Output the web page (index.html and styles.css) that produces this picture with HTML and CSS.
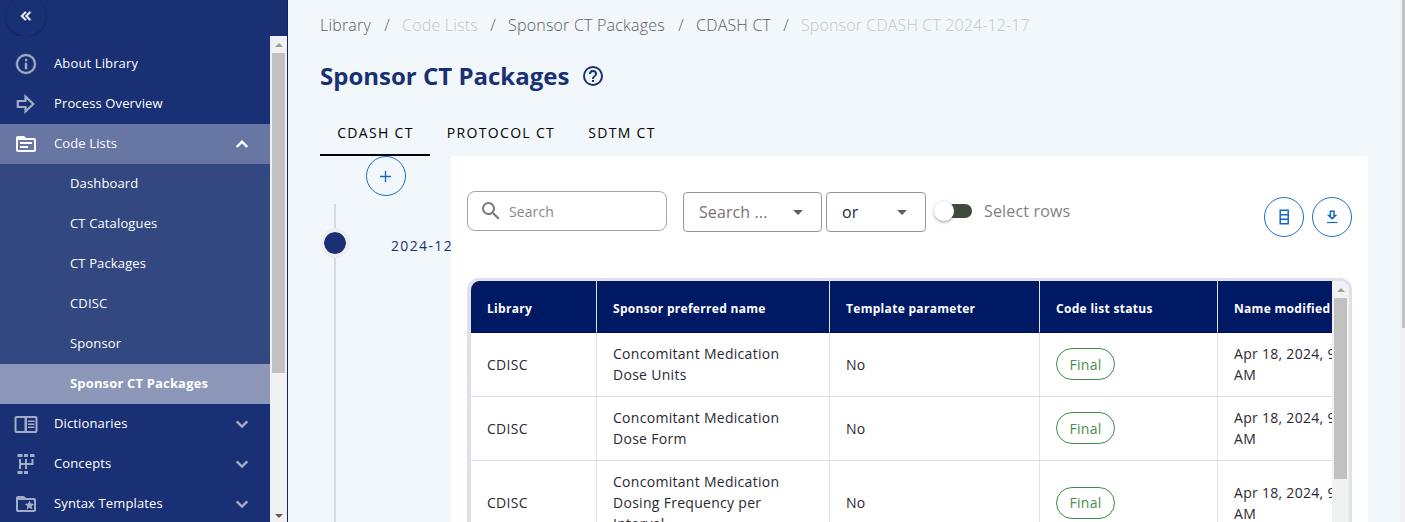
FILE: index.html
```html
<!DOCTYPE html>
<html lang="en">
<head>
<meta charset="utf-8">
<title>Sponsor CT Packages</title>
<link rel="stylesheet" href="styles.css">
</head>
<body>
<div class="app">
  <nav class="sidebar">
    <div class="sidebar-top">
      <button class="collapse"><svg class="i18" viewBox="0 0 24 24"><path d="M18.41,7.41L17,6L11,12L17,18L18.41,16.59L13.83,12L18.41,7.41M12.41,7.41L11,6L5,12L11,18L12.41,16.59L7.83,12L12.41,7.41Z" stroke="currentColor" stroke-width=".8"/></svg></button>
    </div>
    <div class="sidebar-body">
      <div class="menu">
        <a class="item"><svg class="i24" viewBox="0 0 24 24"><path d="M11,9H13V7H11M12,20C7.59,20 4,16.41 4,12C4,7.59 7.59,4 12,4C16.41,4 20,7.59 20,12C20,16.41 16.41,20 12,20M12,2A10,10 0 0,0 2,12A10,10 0 0,0 12,22A10,10 0 0,0 22,12A10,10 0 0,0 12,2M11,17H13V11H11V17Z" stroke="currentColor" stroke-width=".4"/></svg><span>About Library</span></a>
        <a class="item"><svg class="i24" viewBox="0 0 24 24"><path d="M3.8 9H11.5V4.5L19.3 12L11.5 19.5V15H3.8Z" fill="none" stroke="currentColor" stroke-width="2.2"/></svg><span>Process Overview</span></a>
        <a class="item open"><svg class="i24" viewBox="0 0 24 24"><path d="M20,6H12L10,4H4A2,2 0 0,0 2,6V18A2,2 0 0,0 4,20H20A2,2 0 0,0 22,18V8A2,2 0 0,0 20,6M20,18H4V8H20V18M18,12H6V10H18V12M14,16H6V14H14V16Z"/></svg><span>Code Lists</span><svg class="i24 chev" viewBox="0 0 24 24"><path d="M6.7 15L12 9.7L17.3 15"/></svg></a>
        <div class="submenu">
          <a class="sub">Dashboard</a>
          <a class="sub">CT Catalogues</a>
          <a class="sub">CT Packages</a>
          <a class="sub">CDISC</a>
          <a class="sub">Sponsor</a>
          <a class="sub selected">Sponsor CT Packages</a>
        </div>
        <a class="item"><svg class="i24" viewBox="0 0 24 24"><path fill-rule="evenodd" d="M2.5 4H21.5A2 2 0 0 1 23.5 6V19A2 2 0 0 1 21.5 21H2.5A2 2 0 0 1 .5 19V6A2 2 0 0 1 2.5 4ZM2.5 6V19H10.5V6ZM13 6V19H21.5V6ZM14 8.5H20.5V10H14ZM14 11.5H20.5V13H14ZM14 14.5H20.5V16H14Z"/></svg><span>Dictionaries</span><svg class="i24 chev" viewBox="0 0 24 24"><path d="M6.7 9.3L12 14.5L17.3 9.3"/></svg></a>
        <a class="item"><svg class="i24" viewBox="0 0 24 24"><path d="M3.5 2H8.5V5H3.5ZM10 2H14V5H10ZM16 2H20.5V5H16ZM3.5 19H8.5V22H3.5ZM10 19H14V22H10Z"/><path d="M6 7V17M12 7V17M18.5 7V12H6" fill="none" stroke="currentColor" stroke-width="2"/></svg><span>Concepts</span><svg class="i24 chev" viewBox="0 0 24 24"><path d="M6.7 9.3L12 14.5L17.3 9.3"/></svg></a>
        <a class="item"><svg class="i24" viewBox="0 0 24 24"><path fill-rule="evenodd" d="M20,6H12L10,4H4A2,2 0 0,0 2,6V18A2,2 0 0,0 4,20H20A2,2 0 0,0 22,18V8A2,2 0 0,0 20,6M4 8H20V18H4Z"/><path d="M15.5 8.5L16.9 11.6L20.2 12L17.7 14.2L18.4 17.5L15.5 15.8L12.6 17.5L13.3 14.2L10.8 12L14.1 11.6Z"/></svg><span>Syntax Templates</span><svg class="i24 chev" viewBox="0 0 24 24"><path d="M6.7 9.3L12 14.5L17.3 9.3"/></svg></a>
      </div>
      <div class="scrollbar"><i class="arrow up"></i><i class="thumb side-thumb"></i><i class="arrow down"></i></div>
    </div>
  </nav>

  <main class="main">
    <div class="breadcrumbs">
      <span class="b1">Library</span><span class="sep">/</span><span class="b2 off">Code Lists</span><span class="sep">/</span><span class="b3">Sponsor CT Packages</span><span class="sep">/</span><span class="b4">CDASH CT</span><span class="sep">/</span><span class="b5 off">Sponsor CDASH CT 2024-12-17</span>
    </div>
    <h1 class="title"><span>Sponsor CT Packages</span><svg class="i24" viewBox="0 0 24 24"><path d="M11,18H13V16H11V18M12,2A10,10 0 0,0 2,12A10,10 0 0,0 12,22A10,10 0 0,0 22,12A10,10 0 0,0 12,2M12,20C7.59,20 4,16.41 4,12C4,7.59 7.59,4 12,4C16.41,4 20,7.59 20,12C20,16.41 16.41,20 12,20M12,6A4,4 0 0,0 8,10H10A2,2 0 0,1 12,8A2,2 0 0,1 14,10C14,12 11,11.75 11,15H13C13,12.75 16,12.5 16,10A4,4 0 0,0 12,6Z"/></svg></h1>
    <div class="tabs"><a class="tab active">CDASH CT</a><a class="tab wide">PROTOCOL CT</a><a class="tab">SDTM CT</a></div>

    <div class="content">
      <aside class="timeline">
        <button class="round add"><svg class="i16" viewBox="0 0 16 16"><path d="M2 8.5H13M7.5 3V14" fill="none" stroke="currentColor" stroke-width="1.3"/></svg></button>
        <div class="track">
          <div class="rail"><i class="line first"></i><i class="dot"></i><i class="line"></i></div>
          <span class="date">2024-12-17</span>
        </div>
      </aside>

      <section class="panel">
        <div class="toolbar">
          <div class="search"><svg class="i24" viewBox="0 0 24 24"><path d="M9.5,3A6.5,6.5 0 0,1 16,9.5C16,11.11 15.41,12.59 14.44,13.73L14.71,14H15.5L20.5,19L19,20.5L14,15.5V14.71L13.73,14.44C12.59,15.41 11.11,16 9.5,16A6.5,6.5 0 0,1 3,9.5A6.5,6.5 0 0,1 9.5,3M9.5,5C7,5 5,7 5,9.5C5,12 7,14 9.5,14C12,14 14,12 14,9.5C14,7 12,5 9.5,5Z"/></svg><span>Search</span></div>
          <div class="select columns"><span>Search ...</span><i class="caret"></i></div>
          <div class="select logic"><span>or</span><i class="caret"></i></div>
          <div class="switch"><i class="knob"></i></div>
          <span class="switch-label">Select rows</span>
          <div class="actions">
            <button class="round"><svg class="i16" viewBox="0 0 16 16"><path d="M4.2 1.2H12.2V14.8H4.2ZM4.2 5.7H12.2M4.2 10.2H12.2" fill="none" stroke="currentColor" stroke-width="1.5"/></svg></button>
            <button class="round"><svg class="i16" viewBox="0 0 16 16"><path d="M6.4 2.2H10V6.4H11.6L8.2 9.6L4.8 6.4H6.4Z" fill="none" stroke="currentColor" stroke-width="1.5"/><path d="M3 13.5H13.5" fill="none" stroke="currentColor" stroke-width="1.2"/></svg></button>
          </div>
        </div>

        <div class="table-frame">
          <div class="table">
            <div class="row head"><div>Library</div><div>Sponsor preferred name</div><div>Template parameter</div><div>Code list status</div><div>Name modified</div></div>
            <div class="row"><div>CDISC</div><div>Concomitant Medication<br>Dose Units</div><div>No</div><div><span class="chip">Final</span></div><div>Apr 18, 2024, 9:24<br>AM</div></div>
            <div class="row"><div>CDISC</div><div>Concomitant Medication<br>Dose Form</div><div>No</div><div><span class="chip">Final</span></div><div>Apr 18, 2024, 9:24<br>AM</div></div>
            <div class="row tall"><div>CDISC</div><div>Concomitant Medication<br>Dosing Frequency per<br>Interval</div><div>No</div><div><span class="chip">Final</span></div><div>Apr 18, 2024, 9:24<br>AM</div></div>
          </div>
          <div class="scrollbar"><i class="arrow up"></i><i class="thumb table-thumb"></i></div>
        </div>
      </section>
    </div>
  </main>
  <div class="page-scroll"><i></i></div>
</div>
</body>
</html>
```
FILE: styles.css
```css
* { box-sizing: border-box; }
body { margin: 0; font-family: "Open Sans", "Noto Sans", sans-serif; color: #2b2833; }
button { padding: 0; font: inherit; }
svg { display: block; flex: none; fill: currentColor; }
i { display: block; flex: none; }
.i24 { width: 24px; height: 24px; }
.i18 { width: 18px; height: 18px; }
.i16 { width: 16px; height: 16px; }

.app { display: flex; width: 1405px; height: 522px; overflow: hidden; background: #f2f7fb; }

/* Sidebar */
.sidebar { flex: none; width: 288px; height: 522px; background: #193074; border-right: 1px solid #11265f; color: #fff; }
.sidebar-top { height: 36px; padding-left: 6px; overflow: hidden; }
.collapse { display: flex; align-items: center; justify-content: center; width: 40px; height: 40px; margin-top: -4px; border: 0; border-radius: 50%; background: #193074; color: #fff; box-shadow: 0 1px 2px rgba(0, 0, 0, .32); }
.sidebar-body { display: flex; height: 486px; }
.menu { width: 270px; padding-top: 8px; overflow: hidden; }
.item { display: flex; align-items: center; height: 40px; padding: 0 16px 0 14px; font-size: 13px; letter-spacing: .13px; }
.item > span { flex: 1; margin-left: 16px; line-height: 18px; padding-bottom: 2px; }
.item svg { color: #a3acc7; }
.item.open { background: #6876a3; }
.item.open svg { color: #fff; }
.chev path { fill: none; stroke: currentColor; stroke-width: 2.4; }
.submenu { background: #334881; }
.sub { display: flex; align-items: center; height: 40px; padding: 0 0 2px 70px; font-size: 13px; letter-spacing: .14px; }
.sub.selected { background: #8c97b9; font-weight: 700; letter-spacing: .16px; }

/* Scrollbars */
.scrollbar { display: flex; flex-direction: column; flex: none; width: 17px; background: #f0f1f1; }
.arrow { width: 0; height: 0; margin: 7px auto 6px; border: 4px solid transparent; }
.arrow.up { border-top: 0; border-bottom-color: #a0a0a0; }
.arrow.down { margin: auto auto 4px; border-bottom: 0; border-top-color: #665c58; }
.thumb { width: 13px; margin: 0 2px; background: #c1c1c1; }
.side-thumb { height: 320px; }
.table-thumb { height: 181px; }
.page-scroll { flex: none; width: 5px; background: #f0f1f1; padding-left: 2px; }
.page-scroll i { height: 328px; background: #c1c1c1; }

/* Header area */
.main { width: 1112px; padding-left: 32px; }
.breadcrumbs { display: flex; align-items: center; height: 26px; margin-top: 12px; font-size: 16px; font-weight: 300; letter-spacing: .2px; color: #5c6065; white-space: nowrap; }
.breadcrumbs .off { color: #c3c6cd; }
.sep { width: 30px; text-align: center; }
.b1 { width: 52px; }
.b2 { width: 76px; }
.b3 { width: 158px; }
.b4 { width: 75px; }
.b5 { letter-spacing: .13px; }
.title { display: flex; align-items: center; height: 36px; margin: 20px 0 0; font-size: 24px; font-weight: 700; color: #193074; }
.title span { width: 249px; margin-right: 12px; padding-bottom: 2px; white-space: nowrap; }
.tabs { display: flex; height: 48px; margin-top: 14px; }
.tab { display: flex; align-items: center; justify-content: center; height: 48px; width: 100px; font-size: 14px; letter-spacing: 1.32px; color: #000; white-space: nowrap; }
.tab.active { width: 110px; border-bottom: 2px solid #00000f; padding: 2px 0 0 1px; }
.tab.wide { width: 142px; }

/* Timeline */
.content { display: flex; height: 366px; }
.timeline { flex: none; width: 131px; overflow: hidden; }
.round { display: flex; align-items: center; justify-content: center; width: 40px; height: 40px; border: 1px solid #1a70cd; border-radius: 50%; background: transparent; color: #1467c2; }
.add { margin-left: 46px; }
.track { display: flex; height: 318px; margin-top: 8px; }
.rail { display: flex; flex-direction: column; align-items: center; width: 30px; }
.line { flex: 1; width: 2px; background: #d7dbdf; }
.line.first { flex: none; height: 24px; }
.dot { width: 30px; height: 30px; border: 4px solid #edeef0; border-radius: 50%; background: #193074; background-clip: padding-box; }
.date { margin: 32px 0 0 41px; font-size: 14px; line-height: 20px; letter-spacing: 1.35px; color: #193074; white-space: nowrap; }

/* Panel */
.panel { width: 917px; padding: 35px 16px 0; background: #fff; overflow: hidden; }
.toolbar { display: flex; height: 87px; align-items: flex-start; }
.search { display: flex; align-items: center; width: 200px; height: 40px; padding-left: 11px; border: 1px solid #a3a3a3; border-radius: 8px; color: #777; font-size: 14px; }
.search svg { margin-top: -1px; }
.search span { margin-left: 6px; color: #878787; letter-spacing: .1px; }
.select { display: flex; align-items: center; justify-content: space-between; height: 40px; margin-top: 1px; padding: 0 18px 0 15px; border: 1px solid #969696; border-radius: 4px; font-size: 16px; }
.columns { width: 139px; margin-left: 16px; color: #79706f; letter-spacing: .1px; }
.logic { width: 100px; margin-left: 4px; }
.caret { border: 5px solid transparent; border-top-color: #655e5d; border-bottom: 0; }
.switch { width: 26px; height: 14px; margin: 13px 0 0 20px; border-radius: 7px; background: #3f4b3d; }
.knob { width: 20px; height: 20px; margin: -3px 0 0 -12px; border-radius: 50%; background: #fff; box-shadow: 0 2px 3px rgba(60, 70, 90, .3), 0 0 2px 1px rgba(100, 140, 170, .14); }
.switch-label { margin: 9px 0 0 12px; font-size: 16px; line-height: 22px; letter-spacing: .17px; color: #828282; }
.actions { display: flex; gap: 8px; margin: 6px 0 0 auto; }

/* Table */
.table-frame { display: flex; height: 300px; border: solid #dee0eb; border-width: 3px 3px 3px 4px; border-radius: 12px; overflow: hidden; }
.table { width: 861px; overflow: hidden; font-size: 14px; line-height: 21px; letter-spacing: .29px; }
.row { display: grid; grid-template-columns: 126px 233px 210px 178px 220px; height: 64px; width: 967px; }
.row > div { display: flex; align-items: center; padding: 0 0 0 16px; border-right: 1px solid #dee0eb; border-bottom: 1px solid #dee0eb; white-space: nowrap; }
.row > div:nth-child(2), .row > div:nth-child(5) { padding-bottom: 2px; }
.row.tall { height: 85px; }
.row.tall > div:nth-child(odd) { padding-bottom: 2px; }
.row.tall > div:nth-child(5) { padding-bottom: 0; }
.row.head { height: 52px; background: #001965; color: #fff; font-size: 12px; font-weight: 700; letter-spacing: .3px; }
.row.head > div { border-bottom-color: #00104e; padding: 4px 0 0 16px; }
.chip { display: flex; align-items: center; justify-content: center; width: 59px; height: 32px; border: 1px solid #3f8a3f; border-radius: 16px; color: #4a8c4c; margin-bottom: 1px; }
```
